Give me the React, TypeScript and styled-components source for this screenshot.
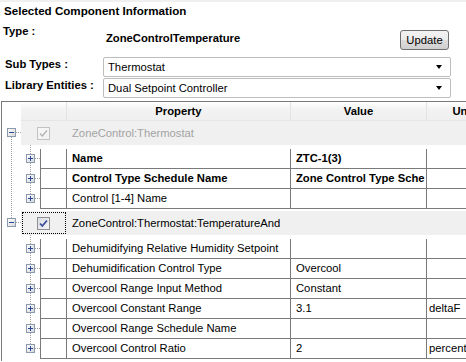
import React from "react";
import styled, { createGlobalStyle, css } from "styled-components";

const GlobalStyle = createGlobalStyle`
  html, body {
    margin: 0;
    padding: 0;
    background: #fff;
  }
  body {
    font-family: "Liberation Sans", Arial, sans-serif;
    font-size: 11.25px;
    color: #000;
  }
`;

const lineColor = "#7a7a7a";
const dotColor = "#a0a0a0";

const Page = styled.div`
  width: 466px;
  height: 362px;
  overflow: hidden;
  box-sizing: border-box;
  border-top: 2px solid #f0f0f0;
  background: #fff;
`;

const Info = styled.section`
  padding: 2px 15px 0 3px;
`;

const Title = styled.div`
  font-weight: bold;
  font-size: 11.6px;
  line-height: 14px;
  padding-left: 1px;
`;

const TypeRow = styled.div`
  display: flex;
  height: 33px;
  margin-top: 6px;
`;

const TypeLabel = styled.div`
  width: 103px;
  font-weight: bold;
  line-height: 14px;
`;

const TypeValue = styled.div`
  flex: 1;
  font-weight: bold;
  line-height: 14px;
  margin-top: 7px;
`;

const Button = styled.button`
  width: 49px;
  height: 20px;
  margin: 6px 2px 0 0;
  padding: 0;
  font-family: inherit;
  font-size: 11.25px;
  color: #000;
  border: 1px solid #707070;
  border-radius: 3px;
  background: linear-gradient(#f2f2f2, #ebebeb 50%, #dddddd 50%, #cfcfcf);
`;

const SelectRow = styled.div`
  display: flex;
  & + & {
    margin-top: 1px;
  }
`;

const SelectLabel = styled.div`
  width: 98px;
  padding-left: 2px;
  font-weight: bold;
  line-height: 14px;
`;

const Dropdown = styled.div`
  flex: 1;
  height: 20px;
  box-sizing: border-box;
  border: 1px solid #bdbdbd;
  border-radius: 2px;
  display: flex;
  align-items: center;
  justify-content: space-between;
  padding: 0 8px 0 4px;
  line-height: 18px;
  &::after {
    content: "";
    border-left: 3.5px solid transparent;
    border-right: 3.5px solid transparent;
    border-top: 4px solid #000;
  }
`;

const Grid = styled.div`
  margin: 3px 0 0 1px;
  border-top: 1px solid ${lineColor};
  border-left: 1px solid ${lineColor};
  overflow: hidden;
`;

const HeaderRow = styled.div`
  display: flex;
  height: 19px;
  padding-left: 19px;
`;

const HeadCell = styled.div<{ $w: number }>`
  flex: 0 0 ${(p) => p.$w}px;
  box-sizing: border-box;
  border-right: 1px solid #e2e2e2;
  border-bottom: 1px solid #e6e6e6;
  background: linear-gradient(#ffffff, #f3f3f3 40%, #efefef);
  font-weight: bold;
  text-align: center;
  line-height: 18px;
  white-space: nowrap;
  overflow: hidden;
`;

const GroupRow = styled.div`
  display: flex;
  height: 24px;
`;

const GroupBody = styled.div<{ $disabled?: boolean }>`
  flex: 1;
  display: flex;
  align-items: center;
  background: #f0f0f0;
  color: ${(p) => (p.$disabled ? "#a3a3a3" : "#000")};
  white-space: nowrap;
`;

const CheckCell = styled.div<{ $focused?: boolean }>`
  flex: 0 0 46px;
  align-self: stretch;
  display: flex;
  align-items: center;
  justify-content: center;
  box-sizing: border-box;
  padding-right: 1px;
  ${(p) =>
    p.$focused &&
    css`
      outline: 1px dotted #000;
      outline-offset: -2px;
    `}
`;

const GroupName = styled.span`
  padding-left: 5px;
`;

const ChildBlock = styled.div`
  display: flex;
`;

const Rows = styled.div`
  flex: 1;
  padding: 4px 0 2px;
`;

const Row = styled.div`
  display: flex;
  height: 20px;
  box-sizing: border-box;
  border-left: 1px solid ${lineColor};
  border-bottom: 1px solid ${lineColor};
`;

const Cell = styled.div<{ $w: number; $bold?: boolean; $pad?: number }>`
  flex: 0 0 ${(p) => p.$w}px;
  box-sizing: border-box;
  border-right: 1px solid ${lineColor};
  padding-left: ${(p) => p.$pad ?? 5}px;
  line-height: 19px;
  font-weight: ${(p) => (p.$bold ? "bold" : "normal")};
  white-space: nowrap;
  overflow: hidden;
`;

const ROW_H = 20;
const PAD_TOP = 4;
const PAD_BOTTOM = 2;

const Expander = ({ x, y, open }: { x: number; y: number; open: boolean }) => (
  <g>
    <rect x={x + 0.5} y={y + 0.5} width={8} height={8} fill="url(#boxFill)" stroke="#8c9aae" />
    <line x1={x + 2} x2={x + 7} y1={y + 4.5} y2={y + 4.5} stroke="#2b4796" />
    {!open && <line x1={x + 4.5} x2={x + 4.5} y1={y + 2} y2={y + 7} stroke="#2b4796" />}
  </g>
);

const BoxGradient = () => (
  <defs>
    <linearGradient id="boxFill" x1="0" y1="0" x2="1" y2="1">
      <stop offset="0" stopColor="#ffffff" />
      <stop offset="1" stopColor="#d6d6d6" />
    </linearGradient>
  </defs>
);

const GroupGutter = ({ first, last }: { first: boolean; last: boolean }) => {
  const h = 24;
  const cy = 7;
  return (
    <svg width={19} height={h} style={{ flex: "0 0 19px" }}>
      <BoxGradient />
      {!first && <line x1={9.5} x2={9.5} y1={0} y2={cy} stroke={dotColor} strokeDasharray="1 1" />}
      {!last && <line x1={9.5} x2={9.5} y1={cy + 9} y2={h} stroke={dotColor} strokeDasharray="1 1" />}
      <line x1={14} x2={19} y1={cy + 4.5} y2={cy + 4.5} stroke={dotColor} strokeDasharray="1 1" />
      <Expander x={5} y={cy} open />
    </svg>
  );
};

const ChildGutter = ({ count, last }: { count: number; last: boolean }) => {
  const h = PAD_TOP + count * ROW_H + PAD_BOTTOM;
  const centers = Array.from({ length: count }, (_, i) => PAD_TOP + i * ROW_H + 10);
  return (
    <svg width={38} height={h} style={{ flex: "0 0 38px" }}>
      {!last && <line x1={9.5} x2={9.5} y1={0} y2={h} stroke={dotColor} strokeDasharray="1 1" />}
      <line x1={28.5} x2={28.5} y1={0} y2={centers[count - 1]} stroke={dotColor} strokeDasharray="1 1" />
      {centers.map((c) => (
        <g key={c}>
          <line x1={33} x2={38} y1={c - 0.5} y2={c - 0.5} stroke={dotColor} strokeDasharray="1 1" />
          <Expander x={24} y={c - 5} open={false} />
        </g>
      ))}
    </svg>
  );
};

const CheckBox = ({ disabled }: { disabled?: boolean }) => (
  <svg width={13} height={13}>
    <defs>
      <linearGradient id={disabled ? "cbOff" : "cbOn"} x1="0" y1="0" x2="1" y2="1">
        <stop offset="0" stopColor={disabled ? "#f7f7f7" : "#d8dbe2"} />
        <stop offset="1" stopColor={disabled ? "#f2f2f2" : "#f7f7f9"} />
      </linearGradient>
    </defs>
    <rect
      x={0.5}
      y={0.5}
      width={12}
      height={12}
      fill={`url(#${disabled ? "cbOff" : "cbOn"})`}
      stroke={disabled ? "#c2c2c2" : "#8e8f8f"}
    />
    <path
      d="M3 6.5 L5.3 9 L10 3.5"
      fill="none"
      stroke={disabled ? "#b4b4b4" : "#3a4e9a"}
      strokeWidth={disabled ? 1.3 : 1.8}
    />
  </svg>
);

interface Field {
  name: string;
  value?: string;
  unit?: string;
  bold?: boolean;
}

interface Group {
  name: string;
  disabled?: boolean;
  focused?: boolean;
  fields: Field[];
}

const groups: Group[] = [
  {
    name: "ZoneControl:Thermostat",
    disabled: true,
    fields: [
      { name: "Name", value: "ZTC-1(3)", bold: true },
      { name: "Control Type Schedule Name", value: "Zone Control Type Sche", bold: true },
      { name: "Control [1-4] Name" },
    ],
  },
  {
    name: "ZoneControl:Thermostat:TemperatureAnd",
    focused: true,
    fields: [
      { name: "Dehumidifying Relative Humidity Setpoint" },
      { name: "Dehumidification Control Type", value: "Overcool" },
      { name: "Overcool Range Input Method", value: "Constant" },
      { name: "Overcool Constant Range", value: "3.1", unit: "deltaF" },
      { name: "Overcool Range Schedule Name" },
      { name: "Overcool Control Ratio", value: "2", unit: "percent" },
    ],
  },
];

export default function App() {
  return (
    <Page>
      <GlobalStyle />
      <Info>
        <Title>Selected Component Information</Title>
        <TypeRow>
          <TypeLabel>Type :</TypeLabel>
          <TypeValue>ZoneControlTemperature</TypeValue>
          <Button>Update</Button>
        </TypeRow>
        <SelectRow>
          <SelectLabel>Sub Types :</SelectLabel>
          <Dropdown>Thermostat</Dropdown>
        </SelectRow>
        <SelectRow>
          <SelectLabel>Library Entities :</SelectLabel>
          <Dropdown>Dual Setpoint Controller</Dropdown>
        </SelectRow>
      </Info>
      <Grid>
        <HeaderRow>
          <HeadCell $w={46} />
          <HeadCell $w={224}>Property</HeadCell>
          <HeadCell $w={136}>Value</HeadCell>
          <HeadCell $w={80}>Units</HeadCell>
        </HeaderRow>
        {groups.map((g, gi) => (
          <React.Fragment key={g.name}>
            <GroupRow>
              <GroupGutter first={gi === 0} last={gi === groups.length - 1} />
              <GroupBody $disabled={g.disabled}>
                <CheckCell $focused={g.focused}>
                  <CheckBox disabled={g.disabled} />
                </CheckCell>
                <GroupName>{g.name}</GroupName>
              </GroupBody>
            </GroupRow>
            <ChildBlock>
              <ChildGutter count={g.fields.length} last={gi === groups.length - 1} />
              <Rows>
                {g.fields.map((f) => (
                  <Row key={f.name}>
                    <Cell $w={26} />
                    <Cell $w={224} $bold={f.bold}>
                      {f.name}
                    </Cell>
                    <Cell $w={136} $bold={f.bold}>
                      {f.value}
                    </Cell>
                    <Cell $w={80} $pad={2}>
                      {f.unit}
                    </Cell>
                  </Row>
                ))}
              </Rows>
            </ChildBlock>
          </React.Fragment>
        ))}
      </Grid>
    </Page>
  );
}
